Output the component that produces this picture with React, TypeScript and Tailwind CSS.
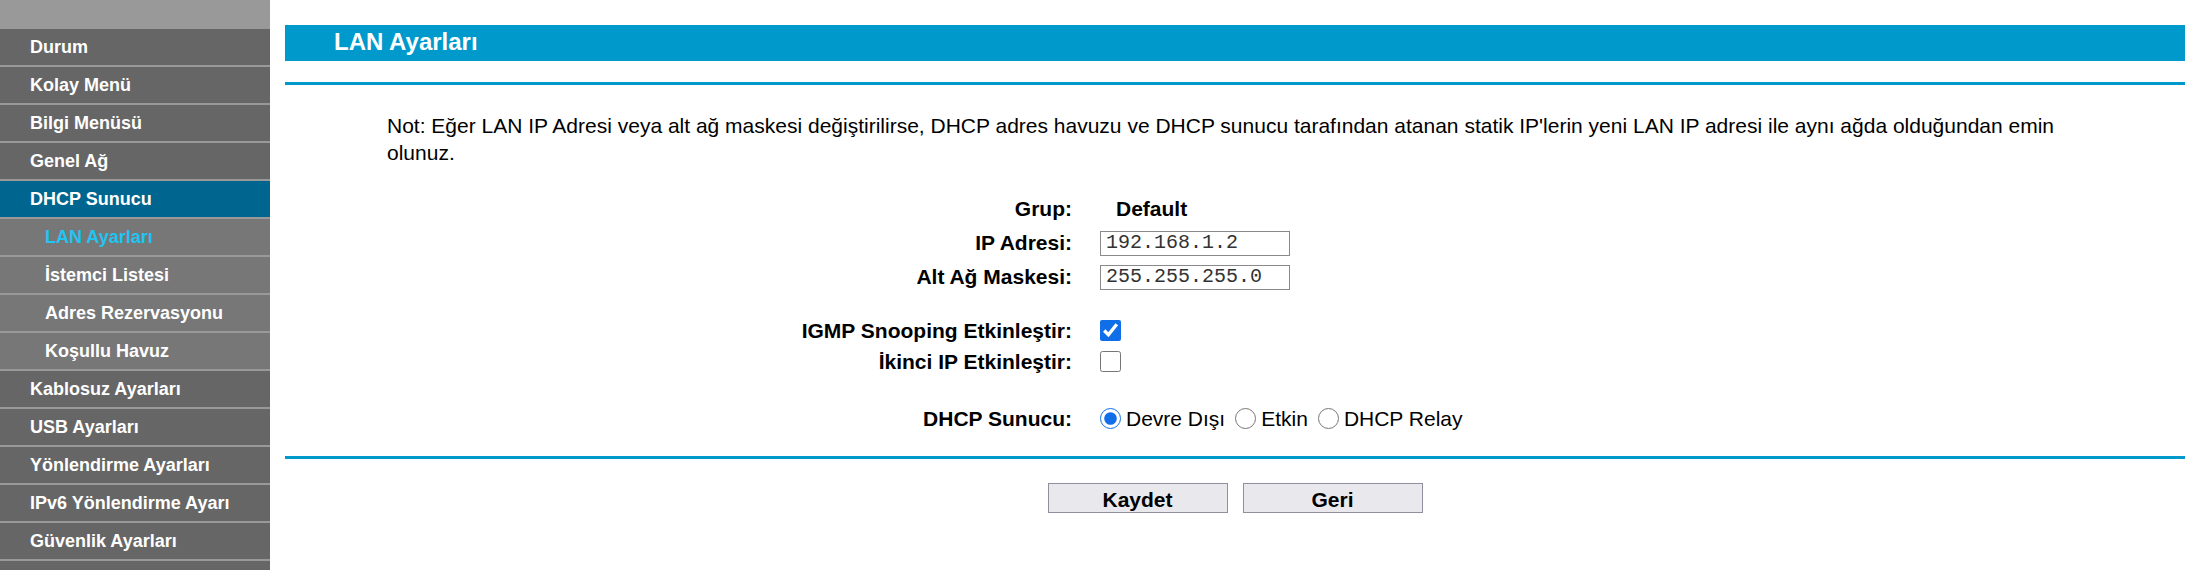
import React from "react";

interface MenuItem {
  label: string;
  sub?: boolean;
  active?: boolean;
  current?: boolean;
}

const menu: MenuItem[] = [
  { label: "Durum" },
  { label: "Kolay Menü" },
  { label: "Bilgi Menüsü" },
  { label: "Genel Ağ" },
  { label: "DHCP Sunucu", active: true },
  { label: "LAN Ayarları", sub: true, current: true },
  { label: "İstemci Listesi", sub: true },
  { label: "Adres Rezervasyonu", sub: true },
  { label: "Koşullu Havuz", sub: true },
  { label: "Kablosuz Ayarları" },
  { label: "USB Ayarları" },
  { label: "Yönlendirme Ayarları" },
  { label: "IPv6 Yönlendirme Ayarı" },
  { label: "Güvenlik Ayarları" },
  // last row is cut off at the bottom of the window, no visible label
  { label: "" },
];

function Sidebar() {
  return (
    <div className="w-[270px] shrink-0 bg-[#999999]">
      <div className="h-[29px]" />
      {menu.map((item, index) => (
        <div
          key={index}
          className={
            "h-[36px] mb-[2px] flex items-center text-[18px] font-bold " +
            (item.active
              ? "bg-[#00668f] text-white pl-[30px]"
              : item.sub
              ? "bg-[#777777] pl-[45px] " +
                (item.current ? "text-[#21c4f2]" : "text-white")
              : "bg-[#666666] text-white pl-[30px]")
          }
        >
          {item.label}
        </div>
      ))}
    </div>
  );
}

function Row({
  label,
  children,
  h = "h-[34px]",
}: {
  label: string;
  children: React.ReactNode;
  h?: string;
}) {
  return (
    <div className={"flex items-center " + h}>
      <div className="w-[787px] text-right font-bold text-[21px] text-black">
        {label}
      </div>
      <div className="ml-[28px] flex items-center">{children}</div>
    </div>
  );
}

function TextBox({ value }: { value: string }) {
  return (
    <div className="w-[190px] h-[25px] border border-[#8a8a8a] pl-[5px] flex items-center font-['Liberation_Mono',monospace] text-[20px] text-[#333333]">
      {value}
    </div>
  );
}

function Radio({ checked, label }: { checked?: boolean; label: string }) {
  return (
    <label className="flex items-center">
      <input
        type="radio"
        name="dhcp"
        defaultChecked={checked}
        className="w-[21px] h-[21px] m-0 accent-[#106ee8]"
      />
      <span className="ml-[5px] mr-[10px] text-[21px] text-black">{label}</span>
    </label>
  );
}

export default function App() {
  return (
    <div className="flex h-[570px] w-[2200px] overflow-hidden bg-white font-['Liberation_Sans',Arial,sans-serif]">
      <Sidebar />
      <div className="w-[1900px] ml-[15px] pt-[25px]">
        <div className="h-[36px] bg-[#0099cc] flex items-center pl-[49px] pb-[3px]">
          <span className="text-white font-bold text-[24px]">LAN Ayarları</span>
        </div>
        <div className="mt-[21px] h-[3px] bg-[#0099cc]" />

        <p className="mt-[27px] ml-[102px] w-[1700px] text-[21px] leading-[27px] text-black">
          Not: Eğer LAN IP Adresi veya alt ağ maskesi değiştirilirse, DHCP adres
          havuzu ve DHCP sunucu tarafından atanan statik IP'lerin yeni LAN IP
          adresi ile aynı ağda olduğundan emin olunuz.
        </p>

        <div className="mt-[26px]">
          <Row label="Grup:">
            <span className="pl-[16px] font-bold text-[21px] text-black">
              Default
            </span>
          </Row>
          <Row label="IP Adresi:">
            <TextBox value="192.168.1.2" />
          </Row>
          <Row label="Alt Ağ Maskesi:">
            <TextBox value="255.255.255.0" />
          </Row>
        </div>

        <div className="mt-[21px]">
          <Row label="IGMP Snooping Etkinleştir:" h="h-[31px]">
            <input
              type="checkbox"
              defaultChecked
              className="w-[21px] h-[21px] m-0 accent-[#106ee8]"
            />
          </Row>
          <Row label="İkinci IP Etkinleştir:" h="h-[31px]">
            <input
              type="checkbox"
              className="w-[21px] h-[21px] m-0 accent-[#106ee8]"
            />
          </Row>
        </div>

        <div className="mt-[26px]">
          <Row label="DHCP Sunucu:" h="h-[31px]">
            <Radio checked label="Devre Dışı" />
            <Radio label="Etkin" />
            <Radio label="DHCP Relay" />
          </Row>
        </div>

        <div className="mt-[22px] h-[3px] bg-[#0099cc]" />

        <div className="mt-[24px] flex justify-center gap-[15px]">
          <button className="w-[180px] h-[30px] bg-[#e9e9ed] border border-[#8f8f9d] text-[21px] font-bold text-black">
            Kaydet
          </button>
          <button className="w-[180px] h-[30px] bg-[#e9e9ed] border border-[#8f8f9d] text-[21px] font-bold text-black">
            Geri
          </button>
        </div>
      </div>
    </div>
  );
}
